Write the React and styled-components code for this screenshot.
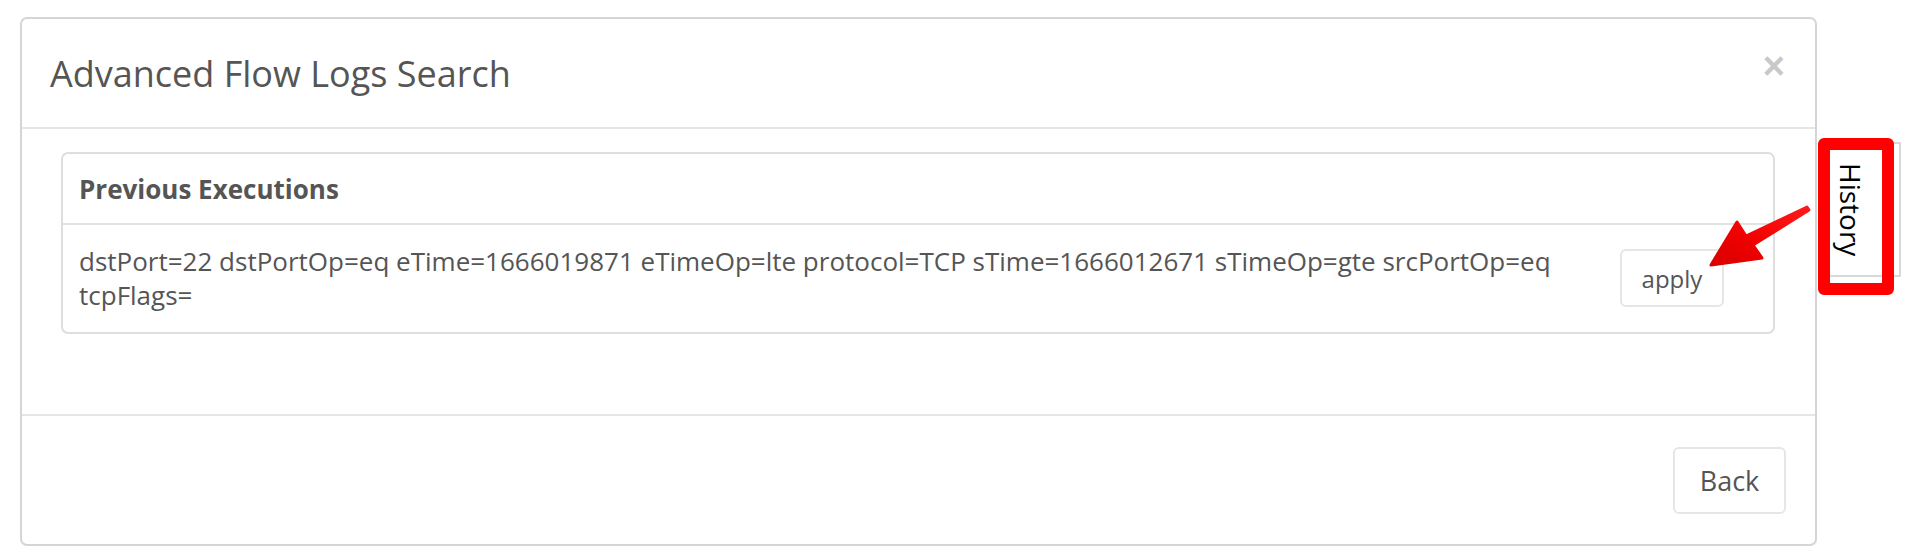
import React from 'react';
import styled, { createGlobalStyle } from 'styled-components';

const GlobalStyle = createGlobalStyle`
  html, body {
    margin: 0;
    padding: 0;
    background: #fff;
  }
  body {
    font-family: 'Open Sans', 'Liberation Sans', sans-serif;
    color: #555;
  }
`;

const Page = styled.div`
  display: flex;
  align-items: flex-start;
  padding: 17px 0 0 20px;
  width: 1914px;
  height: 558px;
  box-sizing: border-box;
  position: relative;
`;

const Modal = styled.div`
  width: 1797px;
  height: 529px;
  box-sizing: border-box;
  border: 2px solid #d5d5d5;
  border-radius: 7px;
  display: flex;
  flex-direction: column;
`;

const Header = styled.div`
  height: 108px;
  border-bottom: 2px solid #e5e5e5;
  display: flex;
  align-items: center;
  justify-content: space-between;
  padding: 0 30px 0 28px;
`;

const Title = styled.h4`
  margin: 0;
  font-size: 36px;
  font-weight: 400;
  color: #555;
`;

const Close = styled.button`
  border: 0;
  background: none;
  padding: 0;
  font-family: 'Liberation Sans', Arial, sans-serif;
  font-size: 38px;
  font-weight: 700;
  line-height: 1;
  color: #c8c8c8;
  cursor: pointer;
  margin-top: -14px;
`;

const Body = styled.div`
  flex: 1;
  padding: 23px 40px 0 39px;
  border-bottom: 2px solid #e5e5e5;
`;

const Panel = styled.div`
  border: 2px solid #dedede;
  border-radius: 7px;
`;

const PanelHeading = styled.div`
  height: 69px;
  display: flex;
  align-items: center;
  padding: 0 16px;
  border-bottom: 2px solid #e2e2e2;
  font-weight: 700;
  font-size: 26px;
  color: #555;
`;

const Row = styled.div`
  display: flex;
  align-items: center;
  padding: 19px 49px 20px 16px;
`;

const Params = styled.div`
  flex: 1;
  font-size: 26px;
  line-height: 34px;
  padding-right: 50px;
`;

const Button = styled.button`
  font-family: 'Open Sans', 'Liberation Sans', sans-serif;
  color: #555;
  background: #fff;
  border: 2px solid #e6e6e6;
  border-radius: 6px;
  box-sizing: border-box;
  cursor: pointer;
  width: ${p => p.$w}px;
  height: ${p => p.$h}px;
  font-size: ${p => p.$size}px;
  padding: 0;
`;

const Footer = styled.div`
  height: 128px;
  display: flex;
  align-items: center;
  justify-content: flex-end;
  padding: 0 29px;
`;

const Side = styled.div`
  position: relative;
  margin-top: 125px;
  margin-left: 2px;
`;

const HistoryTab = styled.div`
  width: 82px;
  height: 135px;
  box-sizing: border-box;
  border: 2px solid #d9d9d9;
  border-left: 0;
  background: #fff;
  display: flex;
  align-items: center;
  justify-content: center;
  writing-mode: vertical-rl;
  font-size: 28px;
  color: #000;
  padding-right: 16px;
`;

const Highlight = styled.div`
  position: absolute;
  left: -1px;
  top: -4px;
  width: 76px;
  height: 157px;
  box-sizing: border-box;
  border: 12px solid #ff0000;
  border-radius: 6px;
  pointer-events: none;
`;

const Arrow = styled.svg`
  position: absolute;
  left: 1700px;
  top: 200px;
  overflow: visible;
`;

export default function App() {
  return (
    <Page>
      <GlobalStyle />
      <Modal>
        <Header>
          <Title>Advanced Flow Logs Search</Title>
          <Close aria-label="Close">×</Close>
        </Header>
        <Body>
          <Panel>
            <PanelHeading>Previous Executions</PanelHeading>
            <Row>
              <Params>
                dstPort=22 dstPortOp=eq eTime=1666019871 eTimeOp=lte protocol=TCP sTime=1666012671 sTimeOp=gte srcPortOp=eq tcpFlags=
              </Params>
              <Button $w={104} $h={58} $size={24}>apply</Button>
            </Row>
          </Panel>
        </Body>
        <Footer>
          <Button $w={113} $h={67} $size={27}>Back</Button>
        </Footer>
      </Modal>
      <Side>
        <HistoryTab>History</HistoryTab>
        <Highlight />
      </Side>
      <Arrow width="115" height="70" viewBox="0 0 115 70">
        <defs>
          <linearGradient id="arrowFill" x1="1" y1="0" x2="0" y2="1">
            <stop offset="0" stopColor="#ff1a1a" />
            <stop offset="0.6" stopColor="#f00000" />
            <stop offset="1" stopColor="#d80000" />
          </linearGradient>
        </defs>
        <polygon
          points="107,7 109,10 53,45 62,58 11,65 37,22 46,36"
          fill="url(#arrowFill)"
          stroke="url(#arrowFill)"
          strokeWidth="3"
          strokeLinejoin="round"
        />
      </Arrow>
    </Page>
  );
}
